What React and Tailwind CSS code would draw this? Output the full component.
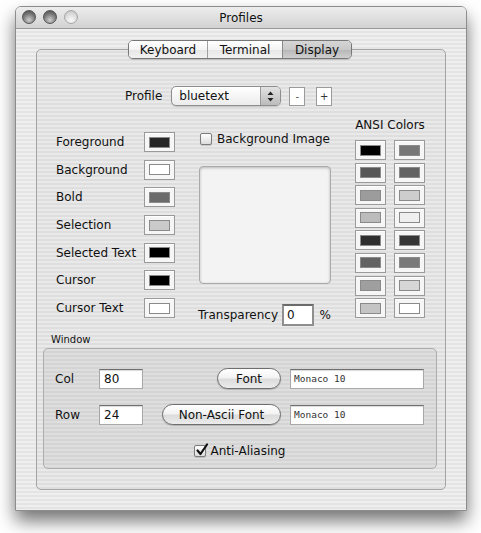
import React from 'react'

const stripes = 'bg-[image:repeating-linear-gradient(to_bottom,#efefef_0px,#efefef_2px,#e4e4e4_2px,#e4e4e4_4px)]'

const Swatch = ({ color }) => (
  <div className="w-[31px] h-[20px] border border-[#9a9a9a] bg-[#f6f6f6] px-[4px] py-[3.5px] shadow-[inset_0_1px_0_#fff]">
    <div className="w-full h-full border border-[#8a8a8a]" style={{ background: color }} />
  </div>
)

const Check = ({ checked }) => (
  <div className="relative w-[12px] h-[12px] rounded-[2px] border border-[#7c7c7c] bg-[linear-gradient(to_bottom,#ffffff,#dcdcdc)] shadow-[0_1px_1px_rgba(0,0,0,0.15)]">
    {checked && (
      <svg className="absolute -top-[3px] left-[0px]" width="14" height="14" viewBox="0 0 14 14">
        <path d="M2.5 7.5 L5.5 11 L12 1.5" fill="none" stroke="#111" strokeWidth="2.2" strokeLinecap="round" strokeLinejoin="round" />
      </svg>
    )}
  </div>
)

const Field = ({ value, className = '', mono }) => (
  <div
    className={`h-[20px] bg-white border border-[#a8a8a8] border-t-[#6f6f6f] shadow-[inset_0_1px_1px_rgba(0,0,0,0.15)] flex ${mono ? "pl-[3px] items-start pt-[2px] text-[9.5px] font-['DejaVu_Sans_Mono',monospace] text-[#333]" : 'items-center pl-[4px] text-[12px]'} ${className}`}
  >
    {value}
  </div>
)

const PushButton = ({ children, className = '' }) => (
  <div
    className={`h-[21px] rounded-full border border-[#6e6e6e] bg-[linear-gradient(to_bottom,#ffffff_0%,#f3f3f3_45%,#dcdcdc_55%,#ececec_100%)] shadow-[0_1px_1px_rgba(0,0,0,0.2)] flex items-center justify-center text-[12px] ${className}`}
  >
    {children}
  </div>
)

const leftRows = [
  ['Foreground', '#262626'],
  ['Background', '#ffffff'],
  ['Bold', '#6b6b6b'],
  ['Selection', '#cacaca'],
  ['Selected Text', '#000000'],
  ['Cursor', '#000000'],
  ['Cursor Text', '#ffffff'],
]

const ansi = [
  '#000000', '#777777',
  '#575757', '#636363',
  '#9c9c9c', '#cdcdcd',
  '#bcbcbc', '#efefef',
  '#2e2e2e', '#363636',
  '#636363', '#7a7a7a',
  '#9f9f9f', '#d6d6d6',
  '#c4c4c4', '#ffffff',
]

export default function App() {
  return (
    <div className="w-[481px] h-[533px] bg-white overflow-hidden pt-[6px] pl-[15px] font-['DejaVu_Sans',sans-serif] text-[#111]">
      <div className="w-[452px] h-[505px] rounded-t-[6px] border border-[#8c8c8c] shadow-[0_10px_18px_rgba(0,0,0,0.55)] overflow-hidden flex flex-col">
        {/* title bar */}
        <div className="relative h-[22px] shrink-0 bg-[linear-gradient(to_bottom,#ededed,#d2d2d2)] border-b border-[#9a9a9a] flex items-center justify-center text-[12px]">
          <div className="absolute left-[6px] top-[3px] flex gap-[7px]">
            <div className="w-[14px] h-[14px] rounded-full border border-[#555] bg-[radial-gradient(circle_at_50%_75%,#cfcfcf_0%,#7a7a7a_55%,#444_100%)]" />
            <div className="w-[14px] h-[14px] rounded-full border border-[#555] bg-[radial-gradient(circle_at_50%_75%,#cfcfcf_0%,#7a7a7a_55%,#444_100%)]" />
            <div className="w-[14px] h-[14px] rounded-full border border-[#a6a6a6] bg-[radial-gradient(circle_at_50%_75%,#fafafa_0%,#d8d8d8_60%,#bdbdbd_100%)]" />
          </div>
          Profiles
        </div>

        {/* body */}
        <div className={`flex-1 ${stripes} pt-[11px] flex flex-col`}>
          {/* tabs */}
          <div className="relative z-10 flex justify-center">
            <div className="flex h-[19px] rounded-[5px] border border-[#777] overflow-hidden text-[12px] shadow-[0_1px_1px_rgba(0,0,0,0.15)] ml-[-2px]">
              <div className="w-[79px] flex items-center justify-center bg-[linear-gradient(to_bottom,#ffffff_0%,#f4f4f4_50%,#e6e6e6_51%,#f2f2f2_100%)] border-r border-[#a0a0a0]">Keyboard</div>
              <div className="w-[75px] flex items-center justify-center bg-[linear-gradient(to_bottom,#ffffff_0%,#f4f4f4_50%,#e6e6e6_51%,#f2f2f2_100%)] border-r border-[#8a8a8a]">Terminal</div>
              <div className="w-[68px] flex items-center justify-center bg-[linear-gradient(to_bottom,#d6d6d6_0%,#c9c9c9_50%,#b6b6b6_51%,#cfcfcf_100%)]">Display</div>
            </div>
          </div>

          {/* tab box */}
          <div className="mx-[20px] -mt-[10px] h-[441px] rounded-[5px] border border-[#a4a4a4] bg-black/[0.025] pt-[36px] flex flex-col">
            {/* profile row */}
            <div className="flex items-center h-[20px] pl-[88px] text-[12px]">
              <span>Profile</span>
              <div className="ml-[9px] w-[110px] h-[20px] rounded-[5px] border border-[#8e8e8e] bg-[linear-gradient(to_bottom,#ffffff,#ececec)] flex items-center overflow-hidden shadow-[0_1px_1px_rgba(0,0,0,0.15)]">
                <span className="flex-1 pl-[7px]">bluetext</span>
                <div className="w-[20px] h-full border-l border-[#9a9a9a] bg-[linear-gradient(to_bottom,#e2e2e2,#bcbcbc)] flex items-center justify-center">
                  <svg width="7" height="11" viewBox="0 0 7 11">
                    <path d="M3.5 0.5 L6.5 4 L0.5 4 Z" fill="#222" />
                    <path d="M3.5 10.5 L6.5 7 L0.5 7 Z" fill="#222" />
                  </svg>
                </div>
              </div>
              <div className="ml-[8px] w-[16px] h-[19px] border border-[#9a9a9a] bg-white flex items-center justify-center text-[10px] text-[#555]">-</div>
              <div className="ml-[11px] w-[16px] h-[19px] border border-[#9a9a9a] bg-white flex items-center justify-center text-[10px] text-[#333]">+</div>
            </div>

            {/* main area */}
            <div className="mt-[12px] ml-[19px] flex text-[12px]">
              <div className="pt-[14px] w-[119px] flex flex-col gap-[7.7px]">
                {leftRows.map(([label, color]) => (
                  <div key={label} className="flex items-center h-[20px]">
                    <span className="w-[88px]">{label}</span>
                    <Swatch color={color} />
                  </div>
                ))}
              </div>

              <div className="ml-[24px] w-[132px] pt-[14px] flex flex-col">
                <div className="h-[14px] flex items-center pl-[1px]">
                  <Check />
                  <span className="ml-[5px]">Background Image</span>
                </div>
                <div className="mt-[20px] h-[118px] rounded-[4px] border border-[#a9a9a9] bg-[#f3f3f3] shadow-[inset_0_1px_3px_rgba(0,0,0,0.25)]" />
                <div className="mt-[20px] h-[22px] flex items-center -ml-[1px]">
                  <span>Transparency</span>
                  <div className="ml-[4px] w-[33px] h-[22px] bg-white border-2 border-[#8f8f8f] border-t-[#6a6a6a] flex items-center pl-[3px]">0</div>
                  <span className="ml-[6px]">%</span>
                </div>
              </div>

              <div className="ml-[24px] w-[70px] flex flex-col">
                <div className="h-[14px] leading-[14px] text-center">ANSI Colors</div>
                <div className="mt-[8px] grid grid-cols-[31px_31px] gap-x-[8px] gap-y-[2.6px]">
                  {ansi.map((c, i) => (
                    <Swatch key={i} color={c} />
                  ))}
                </div>
              </div>
            </div>

            {/* window group */}
            <div className="mt-[8px] ml-[14px] h-[12px] leading-[12px] text-[10px]">Window</div>
            <div className="mt-[2px] ml-[6px] mr-[8px] h-[121px] rounded-[5px] border border-[#acacac] bg-black/[0.045] pt-[19px] pl-[11px] pr-[12px] text-[12px]">
              <div className="flex items-center h-[21px]">
                <span className="w-[44px]">Col</span>
                <Field value="80" className="w-[44px]" />
                <div className="flex-1" />
                <PushButton className="w-[64px]">Font</PushButton>
                <Field value="Monaco 10" mono className="ml-[9px] w-[134px]" />
              </div>
              <div className="mt-[15px] flex items-center h-[21px]">
                <span className="w-[44px]">Row</span>
                <Field value="24" className="w-[44px]" />
                <div className="flex-1" />
                <PushButton className="w-[119px]">Non-Ascii Font</PushButton>
                <Field value="Monaco 10" mono className="ml-[9px] w-[134px]" />
              </div>
              <div className="mt-[19px] h-[14px] flex items-center justify-center">
                <Check checked />
                <span className="ml-[5px]">Anti-Aliasing</span>
              </div>
            </div>
          </div>
        </div>
      </div>
    </div>
  )
}
